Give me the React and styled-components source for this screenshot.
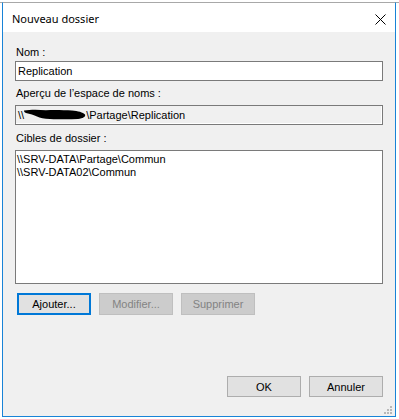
import React from "react";
import styled, { createGlobalStyle, css } from "styled-components";

const GlobalStyle = createGlobalStyle`
  html, body { margin: 0; padding: 0; }
  body {
    background: #ffffff;
    font-family: "Liberation Sans", Arial, sans-serif;
  }
  * { box-sizing: border-box; }
`;

const Screen = styled.div`
  width: 399px;
  height: 419px;
  padding: 2px 0 0 2px;
  background: linear-gradient(#a8a8a8, #a8a8a8) 0 2px / 100% 1px no-repeat, #ffffff;
`;

const Window = styled.div`
  width: 394px;
  height: 415px;
  display: flex;
  flex-direction: column;
  border: 1px solid #1883d7;
  border-top-color: #a8a8a8;
  background: #f0f0f0;
  position: relative;
`;

const TitleBar = styled.div`
  height: 29px;
  flex: none;
  background: #ffffff;
  display: flex;
  align-items: center;
  justify-content: space-between;
  padding: 0 9px 0 9px;
`;

const Title = styled.span`
  font-family: "Noto Sans", "Segoe UI", "Open Sans", sans-serif;
  font-size: 11px;
  color: #000;
  margin-top: 2px;
`;

const CloseButton = styled.button`
  border: none;
  background: transparent;
  padding: 0;
  width: 12px;
  height: 12px;
  display: flex;
  align-items: center;
  justify-content: center;
  margin-top: 3px;
  margin-right: 0px;
`;

const Body = styled.div`
  flex: 1;
  display: flex;
  flex-direction: column;
  padding: 14px 12px 19px 12px;
  font-size: 11px;
  color: #000;
`;

const Label = styled.div`
  height: 13px;
  line-height: 13px;
  padding-left: 1px;
  margin-top: ${(p) => p.$top || 0}px;
  margin-bottom: ${(p) => p.$bottom || 0}px;
`;

const TextBox = styled.div`
  height: 20px;
  line-height: 18px;
  border: 1px solid #7a7a7a;
  background: ${(p) => (p.$readOnly ? "#f0f0f0" : "#ffffff")};
  padding-left: 2px;
  white-space: nowrap;
  ${(p) =>
    p.$readOnly &&
    css`
      box-shadow: inset -1px -1px 0 #ffffff;
    `}
`;

const Redaction = styled.span`
  display: inline-block;
  width: 62px;
  height: 13px;
  vertical-align: top;
  margin-top: 2px;
`;

const ListBox = styled.div`
  height: 134px;
  border: 1px solid #7a7a7a;
  background: #ffffff;
  padding: 2px 0 0 1px;
`;

const ListItem = styled.div`
  height: 13px;
  line-height: 13px;
  white-space: nowrap;
`;

const ButtonRow = styled.div`
  display: flex;
  gap: 8px;
  margin-top: 9px;
  padding-left: 2px;
`;

const Footer = styled.div`
  display: flex;
  justify-content: flex-end;
  gap: 8px;
  margin-top: auto;
`;

const Button = styled.button`
  width: 74px;
  height: ${(p) => (p.$tall ? 22 : 21)}px;
  padding: 0;
  font-family: "Liberation Sans", Arial, sans-serif;
  font-size: 11px;
  color: #000;
  background: #e1e1e1;
  border: 1px solid #adadad;
  ${(p) =>
    p.$focused &&
    css`
      border-color: #0078d7;
      box-shadow: inset 0 0 0 1px #0078d7;
    `}
  ${(p) =>
    p.disabled &&
    css`
      background: #cccccc;
      border-color: #bfbfbf;
      color: #838383;
    `}
`;

const Grip = styled.svg`
  position: absolute;
  right: 2px;
  bottom: 1px;
`;

function CloseIcon() {
  return (
    <svg width="11" height="11" viewBox="0 0 11 11">
      <path d="M0.5 0.5 L10.5 10.5 M10.5 0.5 L0.5 10.5" stroke="#000" strokeWidth="1" fill="none" />
    </svg>
  );
}

function Scribble() {
  return (
    <svg width="62" height="13" viewBox="0 0 62 13">
      <path
        d="M0 2.5 C6 1.5 14 1.5 22 2.2 C30 1.8 40 2 48 2.6 C54 3 59 4.5 61 6.5 C62 8.5 59 10.5 54 11 C44 11.6 34 11.3 26 11 C20 10.8 16 10.2 13 8.6 C10 7 6 5.8 2 5 C0.5 4.6 0 3.5 0 2.5 Z"
        fill="#000"
      />
    </svg>
  );
}

export default function App() {
  return (
    <>
      <GlobalStyle />
      <Screen>
        <Window>
          <TitleBar>
            <Title>Nouveau dossier</Title>
            <CloseButton aria-label="Fermer">
              <CloseIcon />
            </CloseButton>
          </TitleBar>
          <Body>
            <Label $bottom={2}>Nom :</Label>
            <TextBox>Replication</TextBox>
            <Label $top={6} $bottom={5}>Aperçu de l’espace de noms :</Label>
            <TextBox $readOnly>
              {"\\\\"}
              <Redaction>
                <Scribble />
              </Redaction>
              {"\\Partage\\Replication"}
            </TextBox>
            <Label $top={7} $bottom={5}>Cibles de dossier :</Label>
            <ListBox>
              <ListItem>{"\\\\SRV-DATA\\Partage\\Commun"}</ListItem>
              <ListItem>{"\\\\SRV-DATA02\\Commun"}</ListItem>
            </ListBox>
            <ButtonRow>
              <Button $tall $focused>Ajouter...</Button>
              <Button $tall disabled>Modifier...</Button>
              <Button $tall disabled>Supprimer</Button>
            </ButtonRow>
            <Footer>
              <Button>OK</Button>
              <Button>Annuler</Button>
            </Footer>
          </Body>
          <Grip width="9" height="9" viewBox="0 0 9 9">
            <g fill="#b8b8b8">
              <rect x="6" y="0" width="2" height="2" />
              <rect x="3" y="3" width="2" height="2" />
              <rect x="6" y="3" width="2" height="2" />
              <rect x="0" y="6" width="2" height="2" />
              <rect x="3" y="6" width="2" height="2" />
              <rect x="6" y="6" width="2" height="2" />
            </g>
          </Grip>
        </Window>
      </Screen>
    </>
  );
}
